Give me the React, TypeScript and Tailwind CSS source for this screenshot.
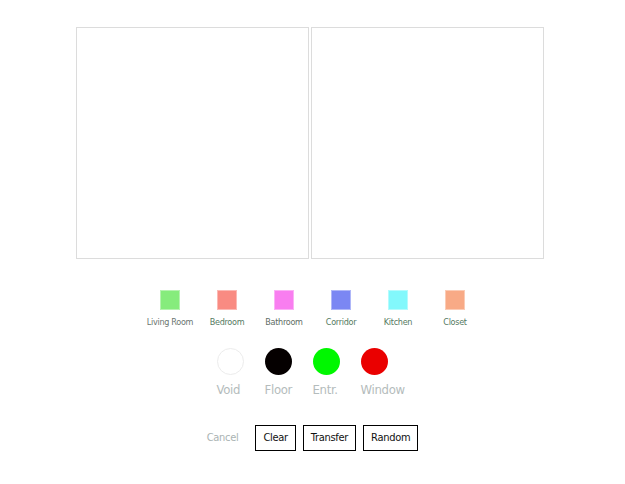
const rooms = [
  { name: 'Living Room', color: 'bg-[#86ec7c]', text: 'text-[#6b7570]' },
  { name: 'Bedroom', color: 'bg-[#f98b82]', text: 'text-[#557a62]' },
  { name: 'Bathroom', color: 'bg-[#f97ef0]', text: 'text-[#5f6e66]' },
  { name: 'Corridor', color: 'bg-[#7b87f3]', text: 'text-[#557a62]' },
  { name: 'Kitchen', color: 'bg-[#82f8fc]', text: 'text-[#557a62]' },
  { name: 'Closet', color: 'bg-[#f8aa86]', text: 'text-[#557a62]' },
]

const cells = [
  { name: 'Void', color: 'bg-white border border-[#ececec]' },
  { name: 'Floor', color: 'bg-[#050000]' },
  { name: 'Entr.', color: 'bg-[#00f700]' },
  { name: 'Window', color: 'bg-[#ea0000]' },
]

const font = { fontFamily: '"Liberation Sans Narrow", "DejaVu Sans Condensed", "Liberation Sans", sans-serif' }

export default function App() {
  return (
    <div className="w-[625px] h-[484px] bg-white" style={font}>
      {/* Canvases */}
      <div className="flex gap-[2px] pt-[27px] pl-[76px]">
        <div className="w-[233px] h-[232px] border border-[#dcdcdc]" />
        <div className="w-[233px] h-[232px] border border-[#dcdcdc]" />
      </div>

      {/* Room legend */}
      <div className="flex justify-center mt-[31px]">
        {rooms.map(r => (
          <div key={r.name} className="w-[57px] flex flex-col items-center">
            <div className={`w-[20px] h-[20px] ${r.color} border border-white/40`} />
            <span className={`mt-[6px] text-[9px] leading-[12px] tracking-[-0.3px] whitespace-nowrap ${r.text}`}>{r.name}</span>
          </div>
        ))}
      </div>

      {/* Cell types */}
      <div className="flex justify-center mt-[20px]">
        {cells.map(c => (
          <div key={c.name} className="w-[27px] mr-[21px] flex flex-col">
            <div className={`w-[27px] h-[27px] rounded-full ${c.color}`} />
            <span className="mt-[7px] text-[13px] leading-[16px] tracking-[-0.3px] text-[#b4bcbc] whitespace-nowrap">{c.name}</span>
          </div>
        ))}
      </div>

      {/* Actions */}
      <div className="flex justify-center items-center mt-[27px] text-[11px] tracking-[-0.3px]">
        <span className="text-[#aab3b3] mr-[17px]">Cancel</span>
        <button className="h-[26px] px-[7px] border border-black text-[#111]">Clear</button>
        <button className="h-[26px] px-[7px] ml-[7px] border border-black text-[#111]">Transfer</button>
        <button className="h-[26px] px-[7px] ml-[7px] border border-black text-[#111]">Random</button>
      </div>
    </div>
  )
}
